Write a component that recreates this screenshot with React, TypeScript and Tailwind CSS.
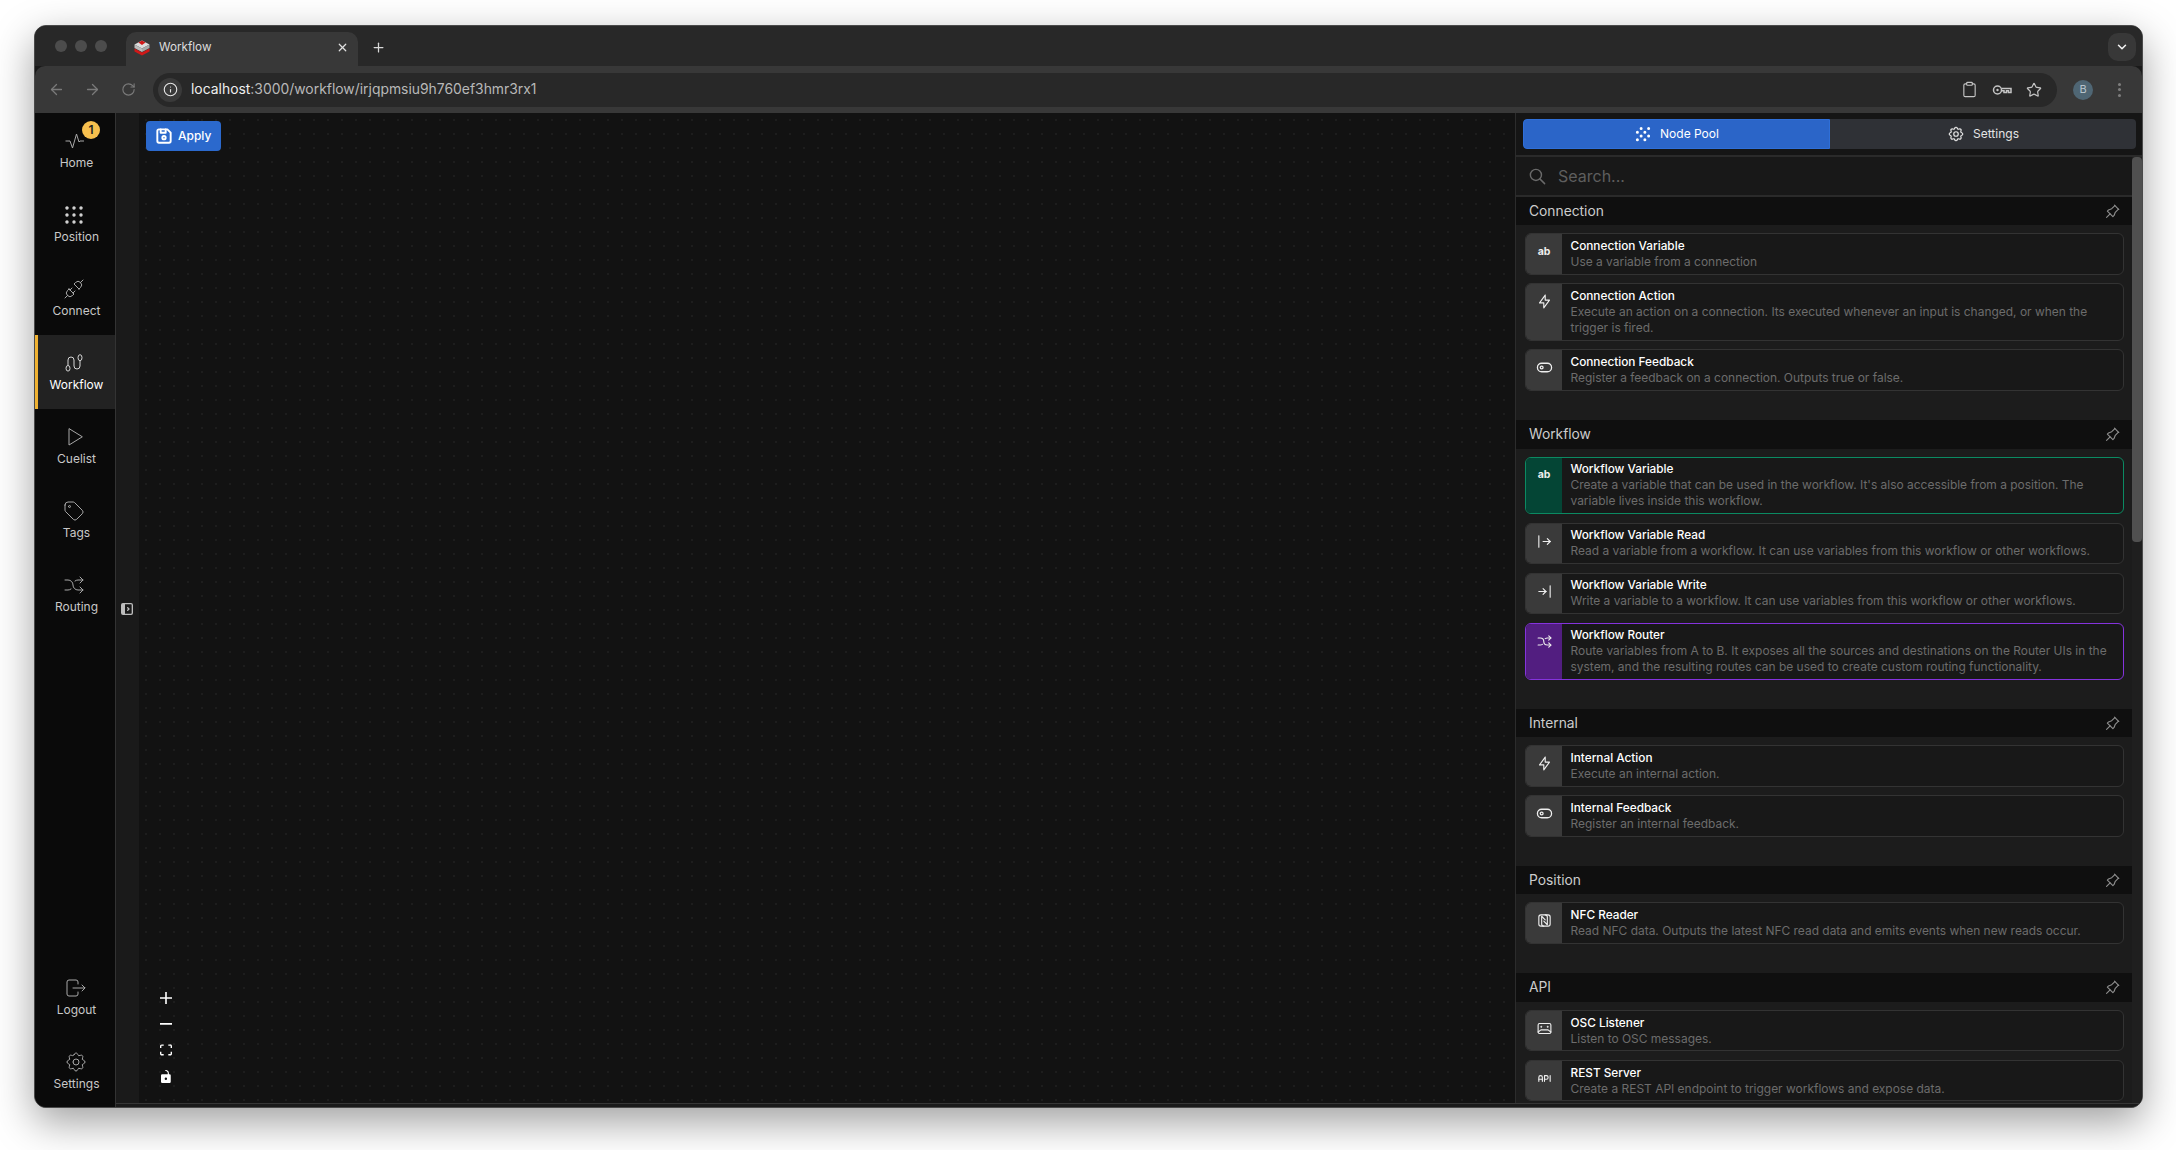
import React from "react";
import {
  TbGridDots, TbPlugConnected, TbPlayerPlay, TbTag, TbArrowsShuffle, TbLogout, TbSettings,
  TbBolt, TbToggleLeft, TbArrowBarRight, TbArrowBarToRight, TbNfc, TbDeviceAudioTape, TbApi,
  TbPin, TbSearch, TbGrain, TbDeviceFloppy, TbLayoutSidebarLeftExpandFilled,
} from "react-icons/tb";
import { ArrowLeft, ArrowRight, RotateCw, Info, Clipboard, Star, ChevronDown, Plus, X } from "lucide-react";

const Wave = () => (
  <svg width="24" height="24" viewBox="0 0 24 24" fill="none" stroke="currentColor" strokeWidth="1">
    <path d="M3.500 12h4.500l2.500 7 4-14 2.500 8 1-1h4" />
  </svg>
);
const Route = () => (
  <svg width="24" height="24" viewBox="0 0 24 24" fill="none" stroke="currentColor" strokeWidth="1">
    <ellipse cx="6" cy="17.300" rx="2" ry="2.800" />
    <ellipse cx="18" cy="6.700" rx="2" ry="3" />
    <path d="M6 14.500V9a3 3 0 0 1 6 0v6a3 3 0 0 0 6 0V9.700" />
  </svg>
);

const navTop = [
  { label: "Home", icon: <Wave />, badge: true },
  { label: "Position", icon: <span className="text-[#dcdcdc]"><TbGridDots size={24} strokeWidth={1.4} /></span> },
  { label: "Connect", icon: <TbPlugConnected size={24} strokeWidth={1} /> },
  { label: "Workflow", icon: <Route />, active: true },
  { label: "Cuelist", icon: <TbPlayerPlay size={24} strokeWidth={1} /> },
  { label: "Tags", icon: <TbTag size={24} strokeWidth={1} /> },
  { label: "Routing", icon: <TbArrowsShuffle size={24} strokeWidth={1} /> },
];
const navBottom = [
  { label: "Logout", icon: <TbLogout size={24} strokeWidth={1} />, right: true },
  { label: "Settings", icon: <TbSettings size={24} strokeWidth={1} />, right: true },
];

function NavItem({ label, icon, active, badge, right }: { label: string; icon: React.ReactNode; active?: boolean; badge?: boolean; right?: boolean }) {
  return (
    <div className={`relative flex h-[74px] shrink-0 flex-col items-center border-l-[3px] pt-[16px] ${active ? "border-[#f0b232] bg-[#222222] text-white" : "border-transparent text-[#c8c8c8]"}`}>
      <div className={`${right ? "mr-[2px]" : "mr-[6px]"} ${active ? "text-[#d8d8d8]" : "text-[#a8a8a8]"}`}>{icon}</div>
      <div className="mt-[2px] text-[12px] leading-[16px]">{label}</div>
      {badge && (
        <div className="absolute left-[44px] top-[8px] flex h-[18px] w-[18px] items-center justify-center rounded-full bg-[#f7c04e] text-[12px] font-semibold leading-none text-[#222]">1</div>
      )}
    </div>
  );
}

type Node = { title: string; desc: string[]; icon: React.ReactNode; tone?: "green" | "purple" };
const ab = <span className="text-[10.500px] font-bold leading-[14px]">ab</span>;
const bolt = <TbBolt size={17} strokeWidth={1.6} />;
const toggle = <TbToggleLeft size={17} strokeWidth={1.8} />;

const sections: { name: string; pad: string; nodes: Node[] }[] = [
  { name: "Connection", pad: "pb-[29.300px]", nodes: [
    { title: "Connection Variable", desc: ["Use a variable from a connection"], icon: ab },
    { title: "Connection Action", desc: ["Execute an action on a connection. Its executed whenever an input is changed, or when the", "trigger is fired."], icon: bolt },
    { title: "Connection Feedback", desc: ["Register a feedback on a connection. Outputs true or false."], icon: toggle },
  ]},
  { name: "Workflow", pad: "pb-[28.700px]", nodes: [
    { title: "Workflow Variable", desc: ["Create a variable that can be used in the workflow. It's also accessible from a position. The", "variable lives inside this workflow."], icon: ab, tone: "green" },
    { title: "Workflow Variable Read", desc: ["Read a variable from a workflow. It can use variables from this workflow or other workflows."], icon: <TbArrowBarRight size={17} strokeWidth={1.6} /> },
    { title: "Workflow Variable Write", desc: ["Write a variable to a workflow. It can use variables from this workflow or other workflows."], icon: <TbArrowBarToRight size={17} strokeWidth={1.6} /> },
    { title: "Workflow Router", desc: ["Route variables from A to B. It exposes all the sources and destinations on the Router UIs in the", "system, and the resulting routes can be used to create custom routing functionality."], icon: <TbArrowsShuffle size={17} strokeWidth={1.6} />, tone: "purple" },
  ]},
  { name: "Internal", pad: "pb-[29.300px]", nodes: [
    { title: "Internal Action", desc: ["Execute an internal action."], icon: bolt },
    { title: "Internal Feedback", desc: ["Register an internal feedback."], icon: toggle },
  ]},
  { name: "Position", pad: "pb-[29.300px]", nodes: [
    { title: "NFC Reader", desc: ["Read NFC data. Outputs the latest NFC read data and emits events when new reads occur."], icon: <TbNfc size={17} strokeWidth={1.6} /> },
  ]},
  { name: "API", pad: "pb-[29.300px]", nodes: [
    { title: "OSC Listener", desc: ["Listen to OSC messages."], icon: <TbDeviceAudioTape size={17} strokeWidth={1.6} /> },
    { title: "REST Server", desc: ["Create a REST API endpoint to trigger workflows and expose data."], icon: <TbApi size={17} strokeWidth={1.6} /> },
  ]},
];

function NodeCard({ node }: { node: Node }) {
  const border = node.tone === "green" ? "border-[#0b8a62]" : node.tone === "purple" ? "border-[#8533dd]" : "border-[#333333]";
  const col = node.tone === "green" ? "bg-[#044535]" : node.tone === "purple" ? "bg-[#521e80]" : "bg-[#3a3a3a]";
  return (
    <div className={`flex overflow-hidden rounded-[6px] border bg-[#181818] ${border}`}>
      <div className={`flex w-[36px] shrink-0 justify-center pt-[9px] text-[#eeeeee] ${col}`}>
        <span className="flex h-[17px] items-center">{node.icon}</span>
      </div>
      <div className="py-[3.850px] pl-[8.500px] text-[11.960px] leading-[16px]">
        <div className="text-[11.800px] font-medium text-white">{node.title}</div>
        {node.desc.map((d) => (
          <div key={d} className="whitespace-nowrap text-[#6c6c6c]">{d}</div>
        ))}
      </div>
    </div>
  );
}

function Favicon() {
  return (
    <svg width="18" height="18" viewBox="0 0 18 18">
      <polygon points="9,1.500 16.500,5.500 9,9.500 1.500,5.500" fill="#dddddd" />
      <polygon points="9,1.500 12.500,3.500 9,6 5.500,3.500" fill="#d01818" />
      <polygon points="1.500,5.500 9,9.500 9,13 1.500,9" fill="#bcbcbc" />
      <polygon points="16.500,5.500 9,9.500 9,13 16.500,9" fill="#a8a8a8" />
      <polygon points="1.500,9.500 9,13.500 16.500,9.500 16.500,12.500 9,16.500 1.500,12.500" fill="#d01818" />
    </svg>
  );
}

function KeyIcon() {
  return (
    <svg width="20" height="12" viewBox="0 0 20 12" fill="none" stroke="#c4c4c4" strokeWidth="1.500">
      <circle cx="5.500" cy="6" r="4" />
      <circle cx="5.500" cy="6" r="1.200" fill="#c4c4c4" stroke="none" />
      <path d="M9.500 4.500H19V8.500H16.500V6.800H14.500V8.500H12V6.800H9.500" />
    </svg>
  );
}

export default function App() {
  return (
    <div className="min-h-[1150px] bg-white pl-[34px] pt-[25px] font-['Inter',sans-serif]">
      <div className="flex h-[1083px] w-[2109px] flex-col overflow-hidden rounded-[12px] border border-[#4a4a4a] bg-[#1a1a1a] shadow-[0_14px_40px_rgba(0,0,0,0.38)]">
        {/* Tab strip */}
        <div className="flex h-[40px] shrink-0 items-end bg-[#282828] pr-[6px]">
          <div className="flex h-[34px] w-[91px] items-center gap-[8px] self-end pb-[6px] pl-[20px]">
            <span className="h-[12px] w-[12px] shrink-0 rounded-full bg-[#4c4c4c]" />
            <span className="h-[12px] w-[12px] shrink-0 rounded-full bg-[#4c4c4c]" />
            <span className="h-[12px] w-[12px] shrink-0 rounded-full bg-[#4c4c4c]" />
          </div>
          <div className="flex h-[34px] w-[232px] items-center rounded-t-[10px] bg-[#383838] pb-[3px] pl-[7px] pr-[9px]">
            <Favicon />
            <span className="ml-[8px] flex-1 text-[11.700px] text-[#dddddd]">Workflow</span>
            <X size={13} color="#e0e0e0" strokeWidth={2.200} />
          </div>
          <div className="flex h-[34px] w-[40px] items-center justify-center pb-[3px]">
            <Plus size={15} color="#d8d8d8" strokeWidth={2} />
          </div>
          <div className="flex-1" />
          <div className="mb-[5px] flex h-[28px] w-[28px] items-center justify-center rounded-[10px] bg-[#383838]">
            <ChevronDown size={14} color="#f0f0f0" strokeWidth={2.600} />
          </div>
        </div>
        {/* Toolbar */}
        <div className="flex h-[47px] shrink-0 items-center rounded-t-[10px] bg-[#383838] pl-[13px] pr-[21.500px]">
          <ArrowLeft size={17} color="#7a7a7a" strokeWidth={1.800} />
          <ArrowRight size={17} color="#7a7a7a" strokeWidth={1.800} className="ml-[19px]" />
          <RotateCw size={15} color="#7a7a7a" strokeWidth={1.800} className="ml-[20px]" />
          <div className="ml-[17px] flex h-[34px] flex-1 items-center rounded-full bg-[#282828] pl-[5px] pr-[15px]">
            <div className="flex h-[24px] w-[24px] items-center justify-center rounded-full bg-[#3a3a3a]">
              <Info size={15} color="#e4e4e4" strokeWidth={1.800} />
            </div>
            <div className="ml-[9px] flex-1 text-[13.900px] text-[#b8b8b8]">
              <span className="text-[#eeeeee]">localhost</span>:3000/workflow/irjqpmsiu9h760ef3hmr3rx1
            </div>
            <Clipboard size={17} color="#c4c4c4" strokeWidth={1.600} />
            <span className="ml-[14px]"><KeyIcon /></span>
            <Star size={16} color="#c4c4c4" strokeWidth={1.800} className="ml-[14px]" />
          </div>
          <div className="ml-[16px] flex h-[20px] w-[20px] items-center justify-center rounded-full bg-[#4f6674] text-[11px] text-[#b8c4cc]">B</div>
          <div className="ml-[24.500px] flex flex-col gap-[2.500px]">
            <span className="h-[3px] w-[3px] rounded-full bg-[#7e7e7e]" />
            <span className="h-[3px] w-[3px] rounded-full bg-[#7e7e7e]" />
            <span className="h-[3px] w-[3px] rounded-full bg-[#7e7e7e]" />
          </div>
        </div>
        {/* App */}
        <div className="flex min-h-0 flex-1">
          <aside className="flex w-[81px] shrink-0 flex-col overflow-hidden border-r border-[#333333] bg-[#0a0a0a]">
            {navTop.map((n) => <NavItem key={n.label} {...n} />)}
            <div className="flex-1" />
            <div className="mb-[-1px]">
              {navBottom.map((n) => <NavItem key={n.label} {...n} />)}
            </div>
          </aside>
          <div className="flex min-w-0 flex-1 flex-col">
            <div className="flex min-h-0 flex-1">
              {/* Canvas */}
              <main className="relative flex min-w-0 flex-1 border-r border-[#2c2c2c] bg-[#1a1a1a]">
                <div className="w-[23px] shrink-0" />
                <div className="flex-1 bg-[#121212] bg-[radial-gradient(#1d1d1d_1px,transparent_1px)] bg-[size:14px_14px]" />
                <button className="absolute left-[30px] top-[8px] flex h-[30px] w-[75px] items-center rounded-[4px] bg-[#2b69cd] pl-[8px] text-[12px] font-medium text-white">
                  <TbDeviceFloppy size={20} strokeWidth={2.300} />
                  <span className="ml-[4px]">Apply</span>
                </button>
                <button className="absolute left-[3px] top-[488px] flex text-[#bdbdbd]">
                  <TbLayoutSidebarLeftExpandFilled size={16} />
                </button>
                <div className="absolute left-[30px] top-[872px] flex w-[40px] flex-col items-center text-white">
                  <span className="flex h-[26px] items-center"><svg width="12" height="12" viewBox="0 0 32 32" fill="currentColor"><path d="M32 18.133H18.133V32h-4.266V18.133H0v-4.266h13.867V0h4.266v13.867H32z" /></svg></span>
                  <span className="flex h-[26px] items-center"><svg width="12" height="2" viewBox="0 0 32 5" fill="currentColor"><path d="M0 0h32v4.200H0z" /></svg></span>
                  <span className="flex h-[26px] items-center"><svg width="12" height="12" viewBox="0 0 32 30" fill="currentColor"><path d="M3.692 4.630c0-.53.400-.938.939-.938h5.215V0H4.708C2.130 0 0 2.054 0 4.630v5.216h3.692V4.631zM27.354 0h-5.200v3.692h5.170c.530 0 .984.400.984.939v5.215H32V4.631A4.624 4.624 0 0027.354 0zm.954 24.830c0 .532-.400.940-.939.940h-5.215v3.768h5.215c2.577 0 4.631-2.130 4.631-4.707v-5.139h-3.692v5.139zm-23.677.940c-.531 0-.939-.400-.939-.940v-5.138H0v5.139c0 2.577 2.130 4.707 4.708 4.707h5.138V25.770H4.631z" /></svg></span>
                  <span className="flex h-[26px] items-center"><svg width="10" height="13" viewBox="0 0 25 32" fill="currentColor"><path d="M21.333 10.667H19.810V7.619C19.810 3.429 16.380 0 12.190 0c-4.114 1.828-1.370 2.133.305 2.438 1.676.305 4.420 2.590 4.420 5.181v3.048H3.047A3.056 3.056 0 000 13.714v15.238A3.056 3.056 0 003.048 32h18.285a3.056 3.056 0 003.048-3.048V13.714a3.056 3.056 0 00-3.048-3.047zM12.190 24.533a3.056 3.056 0 01-3.047-3.047 3.056 3.056 0 013.047-3.048 3.056 3.056 0 013.048 3.048 3.056 3.056 0 01-3.048 3.047z" /></svg></span>
                </div>
              </main>
              {/* Panel */}
              <section className="flex w-[626px] shrink-0 flex-col bg-[#151515]">
                <div className="flex h-[44px] shrink-0 border-b-[2px] border-[#2a2a2a] pb-[1px] pl-[7px] pr-[6px] pt-[6px]">
                  <div className="flex h-[30px] w-[307px] items-center justify-center gap-[8px] rounded-l-[4px] border border-[#2f6fd8] bg-[#2b65c8] text-[12px] text-white">
                    <TbGrain size={18} strokeWidth={2} />
                    <span>Node Pool</span>
                  </div>
                  <div className="flex h-[30px] flex-1 items-center justify-center gap-[8px] rounded-r-[4px] bg-[#2f3136] text-[12px] text-[#e4e4e4]">
                    <TbSettings size={18} strokeWidth={1.600} />
                    <span>Settings</span>
                  </div>
                </div>
                <div className="flex min-h-0 flex-1">
                  <div className="min-w-0 flex-1 overflow-hidden bg-[#1c1c1c]">
                    <div className="flex h-[40px] items-center border-b-[2px] border-[#2a2a2a] bg-[#181818] pl-[12px]">
                      <TbSearch size={19} color="#6a6a6a" strokeWidth={1.800} />
                      <span className="ml-[11px] text-[16px] text-[#5e5e5e]">Search...</span>
                    </div>
                    {sections.map((s) => (
                      <div key={s.name}>
                        <div className="flex h-[28.300px] items-center justify-between bg-[#0f0f0f] pl-[13px] pr-[10px]">
                          <span className="text-[13.800px] text-[#cccccc]">{s.name}</span>
                          <TbPin size={19} color="#8f8f8f" strokeWidth={1.400} />
                        </div>
                        <div className={`flex flex-col gap-[8.300px] pl-[9px] pr-[8px] pt-[8px] ${s.pad}`}>
                          {s.nodes.map((n) => <NodeCard key={n.title} node={n} />)}
                        </div>
                      </div>
                    ))}
                  </div>
                  <div className="w-[10px] shrink-0 bg-[#1f1f1f]">
                    <div className="h-[385px] rounded-[4px] bg-[#505050]" />
                  </div>
                </div>
              </section>
            </div>
            <div className="h-[4px] shrink-0 border-t border-[#363636] bg-[#1a1a1a]" />
          </div>
        </div>
      </div>
    </div>
  );
}
